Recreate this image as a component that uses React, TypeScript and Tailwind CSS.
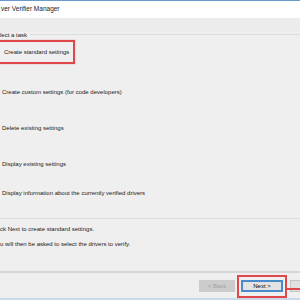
const TASKS = [
  { label: 'Create custom settings (for code developers)', mt: 'mt-[24px]' },
  { label: 'Delete existing settings', mt: 'mt-[28px]' },
  { label: 'Display existing settings', mt: 'mt-[28px]' },
  { label: 'Display information about the currently verified drivers', mt: 'mt-[21px]' },
]

export default function App() {
  return (
    <div className="w-[300px] h-[300px] overflow-hidden flex flex-col bg-[#efefef] font-['Liberation_Sans',Arial,sans-serif] text-[6px] leading-none text-[#1a1a1a]">
      {/* window top edge + title */}
      <div className="h-px bg-[#6b9bcb]" />
      <div className="h-[17px] bg-white flex items-center pl-px text-[6.5px] text-[#222]">
        ver Verifier Manager
      </div>
      <div className="h-[14px] bg-[#ececec]" />

      {/* group box */}
      <div className="flex flex-col h-[189px] border-b border-[#dedede]">
        <div className="flex items-center h-[6px]">
          <span className="pr-[3px]">lect a task</span>
          <div className="flex-1 h-px bg-[#dcdcdc]" />
        </div>

        <div className="mt-[2px] -ml-[10px] w-[85px] h-[24px] flex items-center pl-[12px] border-2 border-[#e0474b] shadow-[0_0_1px_rgba(200,40,40,0.5)]">
          Create standard settings
        </div>

        {TASKS.map(t => (
          <div key={t.label} className={`${t.mt} h-[8px] flex items-center pl-[2px]`}>
            {t.label}
          </div>
        ))}
      </div>

      {/* hint */}
      <div className="mt-[6px] h-[8px] flex items-center">ck Next to create standard settings.</div>
      <div className="mt-[7px] h-[8px] flex items-center">u will then be asked to select the drivers to verify.</div>

      <div className="mt-[23px] h-[2px] bg-[#d6d6d6]" />

      {/* buttons */}
      <div className="relative flex items-center h-[24px] mt-px">
        <div className="shrink-0 ml-[199px] w-[36px] h-[12px] bg-[#cccccc] text-[#a3a3a3] flex items-center justify-center">
          &lt; Back
        </div>
        <div className="shrink-0 ml-[2px] w-[50px] h-[23px] border-2 border-[#e0474b] flex items-center justify-center">
          <div className="w-[42px] h-[12px] bg-[#e3e3e3] border-2 border-[#4a8bc9] flex items-center justify-center text-black">
            Next &gt;
          </div>
        </div>
        <div className="shrink-0 ml-[3px] w-[20px] h-[12px] bg-[#e1e1e1] border border-[#c4c4c4]" />
        <div className="absolute left-[287px] top-[14px] w-[14px] h-[2px] bg-[#e0474b]" />
      </div>

      <div className="flex-1" />
      <div className="h-[2px] bg-[#c9d9ea]" />
    </div>
  )
}
